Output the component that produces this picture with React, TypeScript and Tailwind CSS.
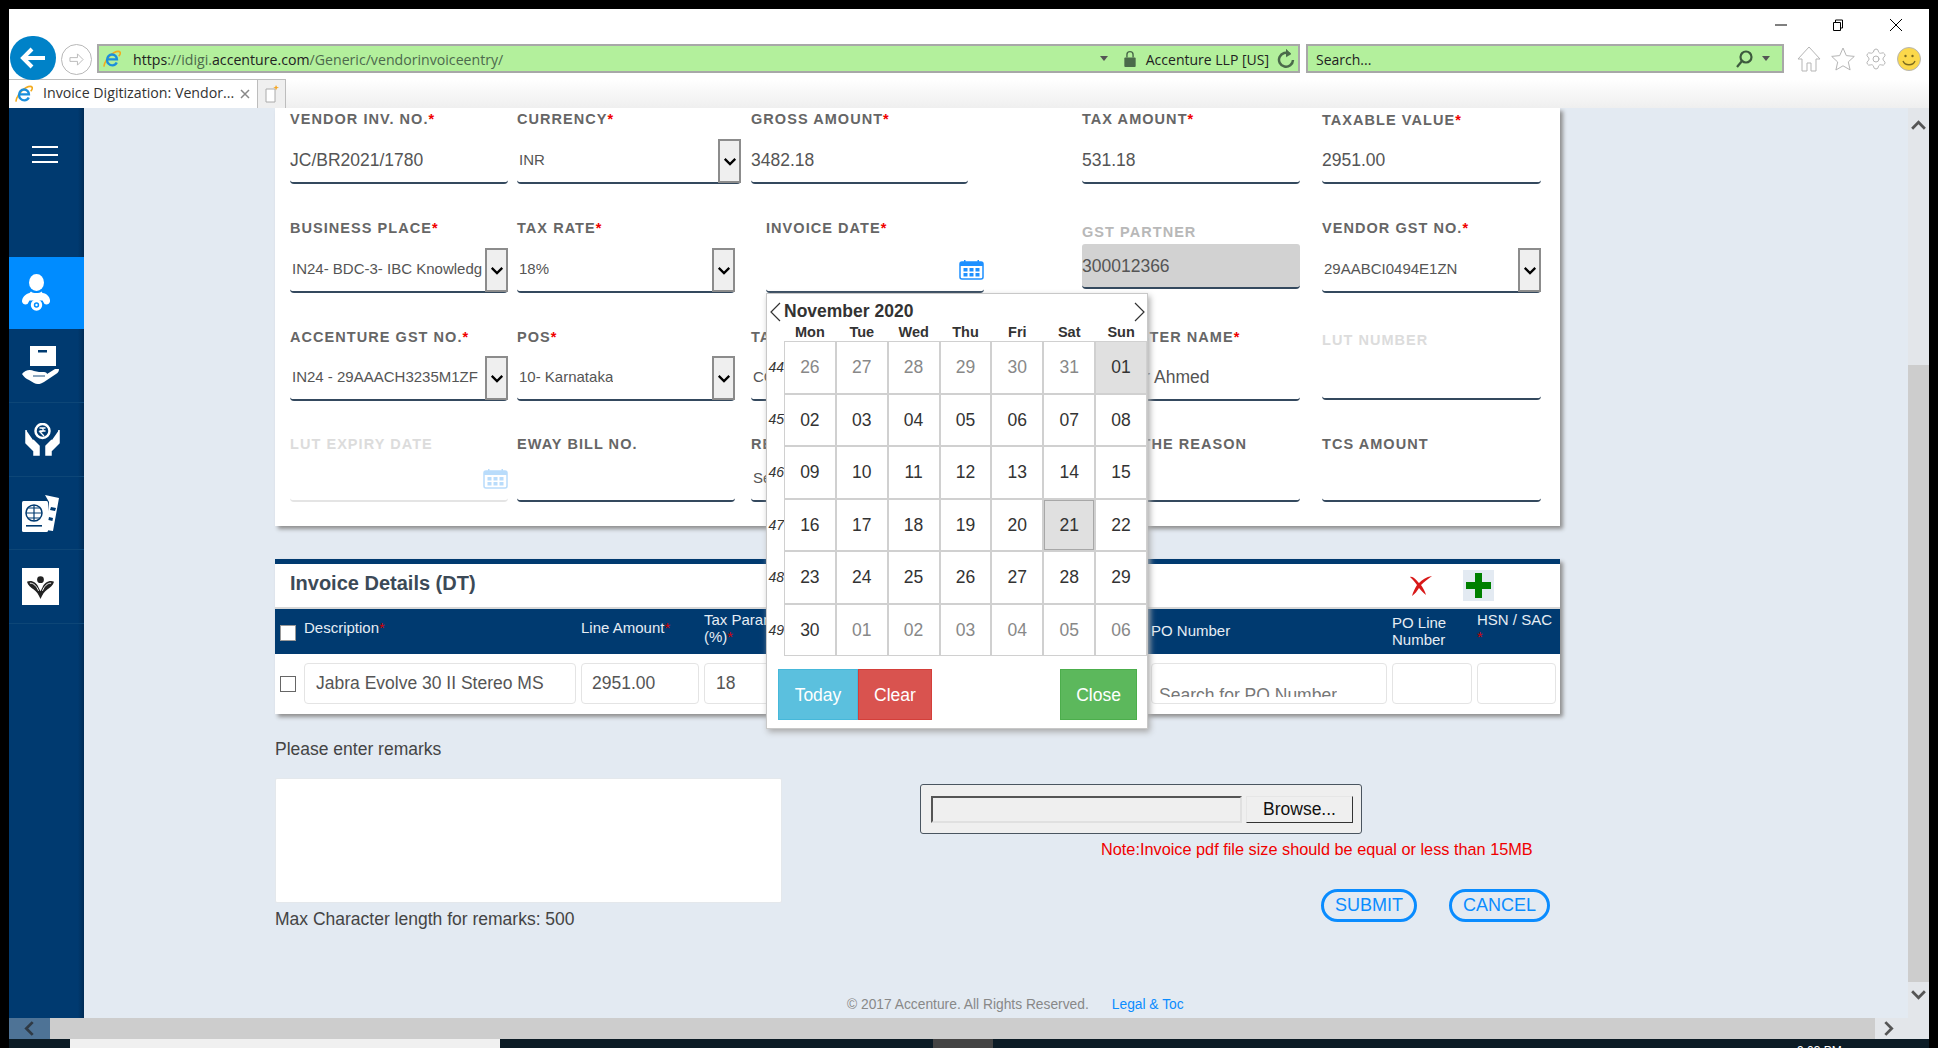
import React from 'react';
import { Settings } from 'lucide-react';

const FONT = "font-['Liberation_Sans',Arial,sans-serif]";
const CHROME_FONT = "font-['Open_Sans',sans-serif]";

const Req = () => <span className="text-[#f00000]">*</span>;

const Chevron = ({ className }: { className: string }) => (
  <svg viewBox="0 0 16 10" className={className} fill="none" stroke="currentColor" strokeWidth="2.6">
    <path d="M2 2l6 6 6-6" />
  </svg>
);

const CalendarIcon = ({ className }: { className: string }) => (
  <svg viewBox="0 0 25 21" className={className} fill="currentColor">
    <rect x="1" y="3" width="23" height="17" rx="2" fill="#fff" stroke="currentColor" strokeWidth="1.5" />
    <rect x="1" y="3" width="23" height="4" />
    <rect x="5" y="1" width="1.5" height="3" />
    <rect x="18.5" y="1" width="1.5" height="3" />
    {[4.5, 10.5, 16.5].map((x) => (
      <React.Fragment key={x}>
        <rect x={x} y="9" width="4" height="3.5" />
        <rect x={x} y="14" width="4" height="3.5" />
      </React.Fragment>
    ))}
  </svg>
);

const IeLogo = ({ className }: { className: string }) => (
  <svg viewBox="0 0 20 20" className={className} fill="none">
    <path d="M1.5 18.5C0 16 6 6 12 3c3-1.5 6-2 7-.5.7 1.2-.3 3-1.5 4.500" stroke="#f2ab1f" strokeWidth="1.8" />
    <path d="M5 10.500h10.500C15.500 7 13 5 10 5S4.500 7.500 4.500 11 7 17 10.500 17c2.500 0 4-1.200 4.800-3" stroke="#1b8fdc" strokeWidth="2.600" />
  </svg>
);

type FieldProps = {
  label: string;
  req?: boolean;
  value?: string;
  select?: boolean;
  disabled?: boolean;
  outer?: string;
  labelCls?: string;
  box?: string;
  text?: string;
  children?: React.ReactNode;
};

const Field = ({ label, req, value, select, disabled, outer = '', labelCls = '', box = 'h-[56px]', text = 'text-[17.5px]', children }: FieldProps) => (
  <div className={outer}>
    <div className={`h-[18px] leading-[18px] text-[14.5px] font-bold tracking-[1.05px] whitespace-nowrap ${disabled ? 'text-[#dcdcdc]' : 'text-[#666]'} ${labelCls}`}>
      {label}
      {req && <Req />}
    </div>
    <div className={`relative flex items-end border-b-2 rounded-b-[4px] ${disabled ? 'border-[#e4e4e4]' : 'border-[#34495e]'} ${box}`}>
      {value && <span className={`pb-[10px] leading-6 text-[#555] whitespace-nowrap overflow-hidden ${text}`}>{value}</span>}
      {select && (
        <span className="absolute right-0 -bottom-[1px] w-[23px] h-[44px] bg-[#efefef] border-2 border-[#8c8c8c] flex items-center justify-center text-black">
          <Chevron className="w-[14px] h-[9px]" />
        </span>
      )}
      {children}
    </div>
  </div>
);

const SideItem = ({ active, h, children }: { active?: boolean; h: string; children: React.ReactNode }) => (
  <div className={`${h} flex items-center pl-[13px] ${active ? 'bg-[#008cff]' : 'border-b border-[#0d4677]'}`}>{children}</div>
);

const Sidebar = () => (
  <div className="w-[75px] shrink-0 bg-[linear-gradient(to_right,#003a70_92%,#002b55)]">
    <div className="h-[149px] pt-[38px] pl-[23px]">
      <div className="w-[26px] h-[17px] flex flex-col justify-between">
        <div className="h-[2px] bg-white" />
        <div className="h-[2px] bg-white" />
        <div className="h-[2px] bg-white" />
      </div>
    </div>
    <SideItem active h="h-[72px]">
      <svg viewBox="0 0 28 38" className="w-[28px] h-[38px]" fill="#fff">
        <ellipse cx="14.500" cy="8.500" rx="7.500" ry="8.500" />
        <path d="M9 17.500c1.500 2 9 2 10.500 0l1 1.500c5 .5 8 5 7.500 8.500-.5 2.500-3 3.500-5.500 2.500l-2-3.500h-13l-2 3.500C3 31 .5 30 0 27.500 0 24 3 20 7.500 19z" />
        <circle cx="14.500" cy="31" r="4.200" fill="#008cff" stroke="#fff" strokeWidth="3" />
        <circle cx="14.500" cy="31" r="1.200" fill="#fff" />
      </svg>
    </SideItem>
    <SideItem h="h-[74px]">
      <svg viewBox="0 0 37 39" className="w-[37px] h-[39px]" fill="#fff">
        <path d="M8 0h26v20H8z" />
        <rect x="16" y="4" width="9" height="2.500" fill="#003a70" />
        <path d="M0 28c3-4 8-5 12-3l5 1h5c2 0 3 1 3 2l8-5 4 0c0 3-1.500 4-3 5l-12 8c-3 2-7 3-10 1l-5-3c-3-1-5-3-7-6z" />
        <path d="M11 30h12" stroke="#003a70" strokeWidth="0.900" />
      </svg>
    </SideItem>
    <SideItem h="h-[74px]">
      <svg viewBox="0 0 37 33" className="w-[37px] h-[33px] ml-[2px]" fill="none" stroke="#fff" strokeWidth="2.500">
        <circle cx="18.500" cy="8" r="7" />
        <path d="M15.500 5h6M15.500 8h6M17 5c3 0 3 4-1 4l4 4" strokeWidth="1.300" />
        <path d="M2 7v13l8 8v4h5v-9l-6-6" fill="#fff" strokeWidth="1.500" />
        <path d="M35 7v13l-8 8v4h-5v-9l6-6" fill="#fff" strokeWidth="1.500" />
      </svg>
    </SideItem>
    <SideItem h="h-[73px]">
      <svg viewBox="0 0 37 37" className="w-[37px] h-[37px]" fill="#fff">
        <path d="M23 0l14 3-6 33-7-1 3-28z" />
        <path d="M29 12l5 1-1 3-5-1zM27 22l4 1-.6 3-4-1z" fill="#003a70" />
        <rect x="0" y="6" width="26" height="31" rx="1.500" />
        <circle cx="12" cy="18" r="8" fill="none" stroke="#003a70" strokeWidth="1.500" />
        <path d="M4 18h16M12 10v16M6 13h12M6 23h12" stroke="#003a70" strokeWidth="1.200" />
        <rect x="4" y="30" width="16" height="1.600" fill="#003a70" />
      </svg>
    </SideItem>
    <SideItem h="h-[74px]">
      <div className="w-[37px] h-[37px] bg-white flex items-center justify-center">
        <svg viewBox="0 0 32 30" className="w-[31px] h-[29px]" fill="#222">
          <circle cx="16" cy="8" r="3.500" />
          <path d="M2 10c5-2 10 1 12 6l2 4 2-4c2-5 7-8 12-6-1 4-4 6-7 8-3 2-5 5-7 10-2-5-4-8-7-10-3-2-6-4-7-8z" />
          <path d="M5 11.500c4 0 7 3 9 8M27 11.500c-4 0-7 3-9 8" fill="none" stroke="#fff" strokeWidth="1" />
        </svg>
      </div>
    </SideItem>
  </div>
);

const Chrome = () => (
  <div className={`h-[99px] shrink-0 bg-white ${CHROME_FONT}`}>
    <div className="h-[27px] pt-[4px] flex items-center justify-end pr-[26px] gap-[45px] text-black">
      <svg viewBox="0 0 12 12" className="w-[12px] h-[12px]" stroke="#000"><path d="M0 6h12" /></svg>
      <svg viewBox="0 0 12 12" className="w-[12px] h-[12px]" fill="none" stroke="#000"><path d="M1.500 3.500h7v8h-7zM3.500 3.500v-2.500h7v8h-2" /></svg>
      <svg viewBox="0 0 14 14" className="w-[14px] h-[14px]" stroke="#000"><path d="M1 1l12 12M13 1L1 13" /></svg>
    </div>
    <div className="h-[43px] flex items-start">
      <div className="ml-[1px] w-[46px] h-[44px] rounded-full bg-[#0082c8] flex items-center justify-center shrink-0 relative z-10">
        <svg viewBox="0 0 26 24" className="w-[26px] h-[24px]" fill="none" stroke="#fff" strokeWidth="4"><path d="M12 3L3 12l9 9M3 12h22" /></svg>
      </div>
      <div className="ml-[5px] mt-[8px] w-[31px] h-[31px] rounded-full border border-[#b8b8b8] flex items-center justify-center shrink-0">
        <svg viewBox="0 0 18 16" className="w-[17px] h-[15px]" fill="none" stroke="#b8b8b8"><path d="M10 2l6 6-6 6v-4H2V6h8z" /></svg>
      </div>
      <div className="ml-[5px] mt-[8px] w-[1203px] h-[29px] bg-[#b3f09c] border-2 border-[#a8a8a8] flex items-center text-[14px] text-[#222] shrink-0">
        <IeLogo className="ml-[4px] w-[18px] h-[18px]" />
        <span className="ml-[12px] pt-[2px] text-[14.15px] whitespace-nowrap">
          https<span className="text-[#4d6a4d]">://idigi.</span>accenture.com<span className="text-[#4d6a4d]">/Generic/vendorinvoiceentry/</span>
        </span>
        <span className="ml-auto w-0 h-0 border-x-[4px] border-x-transparent border-t-[5px] border-t-[#555]" />
        <svg viewBox="0 0 14 18" className="ml-[15px] w-[14px] h-[17px]" fill="#4a6a4a">
          <path d="M3 8V5a4 4 0 0 1 8 0v3h-1.500V5a2.500 2.500 0 0 0-5 0v3z" />
          <rect x="1" y="8" width="12" height="10" rx="1" />
        </svg>
        <span className="ml-[9px] pt-[2px] whitespace-nowrap">Accenture LLP [US]</span>
        <svg viewBox="0 0 18 20" className="ml-[8px] mr-[3px] w-[18px] h-[20px]" fill="none" stroke="#4a6a4a" strokeWidth="2.500"><path d="M13 5a7 7 0 1 0 3 6" /><path d="M9 0l5 5-5 3" fill="#4a6a4a" strokeWidth="0.500" /></svg>
      </div>
      <div className="ml-[6px] mt-[8px] w-[478px] h-[29px] bg-[#b3f09c] border-2 border-[#a8a8a8] flex items-center text-[14px] text-[#222] shrink-0">
        <span className="ml-[8px] pt-[2px]">Search...</span>
        <svg viewBox="0 0 18 18" className="ml-auto w-[18px] h-[18px]" fill="none" stroke="#3d5a3d" strokeWidth="2.200"><circle cx="11" cy="7" r="5.500" /><path d="M7 11l-5 6" /></svg>
        <span className="ml-[9px] mr-[12px] w-0 h-0 border-x-[4px] border-x-transparent border-t-[5px] border-t-[#555]" />
      </div>
      <svg viewBox="0 0 24 26" className="ml-[13px] mt-[10px] w-[24px] h-[26px] shrink-0" fill="none" stroke="#b5b5b5"><path d="M1 13L12 1l11 12h-4v12h-5v-8h-4v8H5V13z" /></svg>
      <svg viewBox="0 0 24 24" className="ml-[10px] mt-[11px] w-[24px] h-[24px] shrink-0" fill="none" stroke="#b5b5b5"><path d="M12 1l3.300 7.600 8 .8-6 5.500 1.800 8L12 18.800 4.900 23l1.800-8-6-5.600 8-.8z" /></svg>
      <Settings className="ml-[9px] mt-[11px] w-[24px] h-[24px] shrink-0 text-[#b5b5b5]" strokeWidth={1} />
      <svg viewBox="0 0 24 24" className="ml-[9px] mt-[11px] w-[24px] h-[24px] shrink-0"><circle cx="12" cy="12" r="11.500" fill="#fbd84b" stroke="#b5b5b5" /><circle cx="8.500" cy="9" r="1.200" fill="#7a6a20" /><circle cx="15.500" cy="9" r="1.200" fill="#7a6a20" /><path d="M6 14c2 5 10 5 12 0" fill="none" stroke="#7a6a20" strokeWidth="1.400" /></svg>
    </div>
    <div className="h-[29px] flex bg-[linear-gradient(to_bottom,#ffffff,#efefef)]">
      <div className="w-[249px] bg-white border-t border-r border-[#bdbdbd] flex items-center text-[14.2px] text-[#333]">
        <IeLogo className="ml-[6px] w-[18px] h-[18px]" />
        <span className="ml-[10px] pb-[2px] whitespace-nowrap">Invoice Digitization: Vendor...</span>
        <svg viewBox="0 0 10 10" className="ml-[6px] w-[10px] h-[10px]" stroke="#888" strokeWidth="1.500"><path d="M1 1l8 8M9 1L1 9" /></svg>
      </div>
      <div className="w-[28px] bg-[#efefef] border-t border-r border-[#bdbdbd] flex items-center justify-center">
        <svg viewBox="0 0 14 18" className="w-[14px] h-[18px]"><path d="M1 4h9v13H1z" fill="#fff" stroke="#aaa" /><path d="M11 0l1 2 2 .5-2 .7-1 2-.8-2-2-.7 2-.5z" fill="#f5a623" /></svg>
      </div>
    </div>
  </div>
);

const FormPanel = () => (
  <div className="w-[1285px] h-[418px] bg-white shadow-[3px_3px_4px_#8f8f8f] pl-[15px] pt-[2px] grid grid-cols-[227px_234px_331px_240px_219px] grid-rows-[109px_109px_107px_1fr]">
    <Field label="VENDOR INV. NO." req value="JC/BR2021/1780" outer="w-[218px]" />
    <Field label="CURRENCY" req value="INR" select text="text-[15px] pl-[2px]" outer="w-[224px]" />
    <Field label="GROSS AMOUNT" req value="3482.18" outer="w-[217px]" />
    <Field label="TAX AMOUNT" req value="531.18" outer="w-[218px]" />
    <Field label="TAXABLE VALUE" req value="2951.00" outer="w-[219px]" labelCls="mt-[1px]" box="h-[55px]" />

    <Field label="BUSINESS PLACE" req value="IN24- BDC-3- IBC Knowledg" select text="text-[15px] pl-[2px]" outer="w-[218px]" />
    <Field label="TAX RATE" req value="18%" select text="text-[15px] pl-[2px]" outer="w-[218px]" />
    <Field label="INVOICE DATE" req outer="w-[218px] ml-[15px]">
      <CalendarIcon className="absolute right-[0px] bottom-[11px] w-[25px] h-[21px] text-[#1e90ff]" />
    </Field>
    <Field label="GST PARTNER" outer="w-[218px]" labelCls="mt-[4px] !text-[#b8b8b8]" box="h-[45px] mt-[3px] bg-[#d2d2d2] rounded-t-[3px]" value="300012366" text="text-[17.5px] !pb-[9px]" />
    <Field label="VENDOR GST NO." req value="29AABCI0494E1ZN" select text="text-[15px] pl-[2px]" outer="w-[219px]" />

    <Field label="ACCENTURE GST NO." req value="IN24 - 29AAACH3235M1ZF" select text="text-[15px] pl-[2px]" outer="w-[218px]" box="h-[55px]" />
    <Field label="POS" req value="10- Karnataka" select text="text-[15px] pl-[2px]" outer="w-[218px]" box="h-[55px]" />
    <Field label="TAX CODE" req value="CGST" text="text-[15px] pl-[2px]" outer="w-[217px]" box="h-[55px]" />
    <Field label="REQUESTER NAME" req value="Mansoor Ahmed" outer="w-[218px]" box="h-[55px]" />
    <Field label="LUT NUMBER" outer="w-[219px]" labelCls="mt-[3px] !text-[#dcdcdc]" box="h-[51px]" />

    <Field label="LUT EXPIRY DATE" disabled outer="w-[218px]" box="h-[49px]">
      <CalendarIcon className="absolute right-0 bottom-[11px] w-[25px] h-[21px] text-[#b9dcfb]" />
    </Field>
    <Field label="EWAY BILL NO." outer="w-[218px]" box="h-[49px]" />
    <Field label="REASON" value="Select" text="text-[15px] pl-[2px]" outer="w-[217px]" box="h-[49px]" />
    <Field label="ENTER THE REASON" outer="w-[218px]" box="h-[49px]" />
    <Field label="TCS AMOUNT" outer="w-[219px]" box="h-[49px]" />
  </div>
);

const Cell = ({ children, w = '' }: { children?: React.ReactNode; w?: string }) => (
  <div className={`h-[41px] bg-white border border-[#e4e4e4] rounded-[4px] flex items-center text-[17.5px] text-[#555] overflow-hidden whitespace-nowrap ${w}`}>{children}</div>
);

const TABLE_COLS = 'grid grid-cols-[19px_272px_118px_442px_236px_80px_79px] gap-x-[5px] pl-[5px]';

const InvoiceDetails = () => (
  <div className="mt-[33px] w-[1285px] h-[155px] bg-white border-t-[5px] border-[#003a70] shadow-[3px_3px_4px_#8f8f8f]">
    <div className="h-[45px] flex items-center border-b-2 border-[#d8d8d8]">
      <h2 className="ml-[15px] pb-[5px] text-[20px] font-bold text-[#3c4a57]">Invoice Details (DT)</h2>
      <svg viewBox="0 0 22 20" className="ml-[934px] w-[22px] h-[20px]"><path d="M0 1c3-1 6 3 9 6 3-3 7-6 13-7-4 3-8 6-11 9 2 3 4 6 5 10-3-2-5-5-7-7-2 3-4 6-7 8 1-4 3-8 5-11C5 6 3 4 0 1z" fill="#d81818" /></svg>
      <div className="ml-[31px] w-[31px] h-[31px] bg-[#e3eaf2] flex items-center justify-center">
        <svg viewBox="0 0 25 25" className="w-[25px] h-[25px]" fill="#008000"><path d="M9 0h7v9h9v7h-9v9H9v-9H0V9h9z" /></svg>
      </div>
    </div>
    <div className={`${TABLE_COLS} h-[45px] bg-[#003a70] text-[15px] leading-[17px] text-[#e6edf4]`}>
      <div className="flex items-center pt-[2px]"><div className="w-[16px] h-[16px] bg-white border border-[#999]" /></div>
      <div className="pt-[10px]">Description<span className="text-[#d00000]">*</span></div>
      <div className="pt-[10px]">Line Amount<span className="text-[#d00000]">*</span></div>
      <div className="pt-[2px]">Tax Parameter<br />(%)<span className="text-[#d00000]">*</span></div>
      <div className="pt-[13px]">PO Number</div>
      <div className="pt-[5px]">PO Line Number</div>
      <div className="pt-[2px] whitespace-nowrap">HSN / SAC<br /><span className="text-[#d00000]">*</span></div>
    </div>
    <div className={`${TABLE_COLS} pt-[9px]`}>
      <div className="flex items-center"><div className="w-[16px] h-[16px] bg-white border border-[#666]" /></div>
      <Cell><span className="pl-[11px]">Jabra Evolve 30 II Stereo MS</span></Cell>
      <Cell><span className="pl-[10px]">2951.00</span></Cell>
      <Cell w="w-[120px]"><span className="pl-[11px]">18</span></Cell>
      <Cell>
        <div className="self-start h-[33px] overflow-hidden pl-[7px] pt-[21px] leading-[20px] text-[#777]">Search for PO Number</div>
      </Cell>
      <Cell />
      <Cell />
    </div>
  </div>
);

const WEEKS: [number, string[]][] = [
  [44, ['26', '27', '28', '29', '30', '31', '01']],
  [45, ['02', '03', '04', '05', '06', '07', '08']],
  [46, ['09', '10', '11', '12', '13', '14', '15']],
  [47, ['16', '17', '18', '19', '20', '21', '22']],
  [48, ['23', '24', '25', '26', '27', '28', '29']],
  [49, ['30', '01', '02', '03', '04', '05', '06']],
];

const DatePicker = () => (
  <div className="absolute left-[682px] top-[185px] w-[382px] h-[436px] bg-white border border-[#c8c8c8] shadow-[2px_3px_6px_#aaaaaa] z-10">
    <div className="h-[29px] flex items-center pl-[3px] pr-[3px] pt-[6px] text-[#333]">
      <svg viewBox="0 0 11 20" className="w-[11px] h-[20px]" fill="none" stroke="#333" strokeWidth="1.200"><path d="M10 1L1 10l9 9" /></svg>
      <span className="ml-[3px] text-[17.5px] font-bold">November 2020</span>
      <svg viewBox="0 0 11 20" className="ml-auto mr-[-1px] w-[11px] h-[20px]" fill="none" stroke="#333" strokeWidth="1.200"><path d="M1 1l9 9-9 9" /></svg>
    </div>
    <div className="pl-[17px] h-[18px] grid grid-cols-7 text-[14.5px] font-bold text-[#333] leading-[19px] text-center">
      {['Mon', 'Tue', 'Wed', 'Thu', 'Fri', 'Sat', 'Sun'].map((d) => (
        <div key={d}>{d}</div>
      ))}
    </div>
    <div className="flex">
      <div className="w-[17px] pt-[1px] grid grid-rows-6 gap-y-[2px] text-[14px] italic text-[#333]">
        {WEEKS.map(([n]) => (
          <div key={n} className="h-[50.5px] flex items-center justify-end">{n}</div>
        ))}
      </div>
      <div className="w-[364px] grid grid-cols-7 gap-[2px] p-[1px] bg-[#d0d0d0] text-[17.5px]">
        {WEEKS.map(([n, days], r) =>
          days.map((d, c) => {
            const muted = (r === 0 && c < 6) || (r === 5 && c > 0);
            const today = r === 0 && c === 6;
            const selected = r === 3 && c === 5;
            return (
              <div
                key={`${n}-${c}`}
                className={`h-[50.5px] flex items-center justify-center ${muted ? 'text-[#888]' : 'text-[#333]'} ${today ? 'bg-[#e0e0e0]' : selected ? 'bg-[#e0e0e0] border border-[#a8a8a8]' : 'bg-white'}`}
              >
                {d}
              </div>
            );
          }),
        )}
      </div>
    </div>
    <div className="mt-[13px] pl-[11px] pr-[10px] flex text-[17.5px] text-white">
      <div className="w-[80px] h-[51px] bg-[#5bc0de] border border-[#46b8da] flex items-center justify-center pt-[1px]">Today</div>
      <div className="w-[74px] h-[51px] bg-[#d9534f] border border-[#d43f3a] flex items-center justify-center pt-[1px]">Clear</div>
      <div className="ml-auto w-[77px] h-[51px] bg-[#5cb85c] border border-[#4cae4c] flex items-center justify-center pt-[1px]">Close</div>
    </div>
  </div>
);

const BottomArea = () => (
  <div className="w-[1285px] flex">
    <div className="w-[507px] shrink-0">
      <div className="mt-[23px] h-[24px] leading-6 text-[17.5px] text-[#444]">Please enter remarks</div>
      <div className="mt-[17px] h-[125px] bg-white border border-[#e4e8ec] rounded-[2px]" />
      <div className="mt-[4px] h-[24px] leading-6 text-[17.5px] text-[#444]">Max Character length for remarks: 500</div>
    </div>
    <div className="ml-[138px] w-[640px] shrink-0">
      <div className="mt-[70px] w-[442px] h-[50px] bg-[#efefef] border border-[#4a5560] rounded-[3px] flex items-center pl-[10px]">
        <div className="w-[311px] h-[27px] bg-[#efefef] border-2 border-[#e0e0e0] border-t-[#555] border-l-[#555]" />
        <div className="ml-[4px] w-[107px] h-[27px] border border-[#e6e6e6] border-r-[#333] border-b-[#333] text-[17.5px] leading-[25px] text-center text-[#111]">Browse...</div>
      </div>
      <div className="mt-[3px] pl-[181px] h-[24px] leading-6 text-[16.3px] text-[#f00000] whitespace-nowrap">Note:Invoice pdf file size should be equal or less than 15MB</div>
      <div className="mt-[28px] pl-[401px] flex gap-[32px]">
        <div className="w-[96px] h-[33px] rounded-full border-[3px] border-[#0a8cff] text-[18px] leading-[27px] text-center text-[#0a8cff]">SUBMIT</div>
        <div className="w-[101px] h-[33px] rounded-full border-[3px] border-[#0a8cff] text-[18px] leading-[27px] text-center text-[#0a8cff]">CANCEL</div>
      </div>
    </div>
  </div>
);

export default function App() {
  return (
    <div className={`w-screen h-screen overflow-hidden bg-black pl-[9px] pt-[9px] pr-[9px] flex flex-col ${FONT}`}>
      <Chrome />
      <div className="h-[910px] flex shrink-0">
        <Sidebar />
        <main className="relative flex-1 bg-[#e3eaf2] pl-[191px] flex flex-col overflow-hidden">
          <FormPanel />
          <InvoiceDetails />
          <BottomArea />
          <div className="mt-auto mb-[3px] h-[20px] pl-[572px] text-[13.8px] leading-[20px] whitespace-nowrap text-[#888]">
            © 2017 Accenture. All Rights Reserved.
            <span className="ml-[23px] text-[#0a8cff]">Legal &amp; Toc</span>
          </div>
          <DatePicker />
        </main>
        <div className="w-[21px] shrink-0 bg-[#e3e6ea] flex flex-col">
          <div className="h-[257px] pt-[12px] flex justify-center text-[#555]">
            <Chevron className="w-[17px] h-[11px] rotate-180" />
          </div>
          <div className="flex-1 bg-[#cdcdcd]" />
          <div className="h-[36px] pt-[7px] flex justify-center text-[#555]">
            <Chevron className="w-[17px] h-[11px]" />
          </div>
        </div>
      </div>
      <div className="h-[21px] shrink-0 flex bg-[#e3e6ea]">
        <div className="w-[41px] bg-[#4e7396] flex items-center justify-center text-[#2f3a45]">
          <Chevron className="w-[17px] h-[11px] rotate-90" />
        </div>
        <div className="w-[1825px] bg-[#cdcdcd]" />
        <div className="pl-[5px] flex items-center text-[#555]">
          <Chevron className="w-[17px] h-[11px] -rotate-90" />
        </div>
      </div>
      <div className="h-[9px] shrink-0 flex bg-[#0c1c26] overflow-hidden">
        <div className="ml-[61px] w-[430px] bg-[#f0f0f0]" />
        <div className="ml-[433px] w-[60px] bg-[#444]" />
        <div className="ml-[804px] text-[12px] leading-[14px] pt-[5px] text-white whitespace-nowrap">9:03 PM</div>
      </div>
    </div>
  );
}
